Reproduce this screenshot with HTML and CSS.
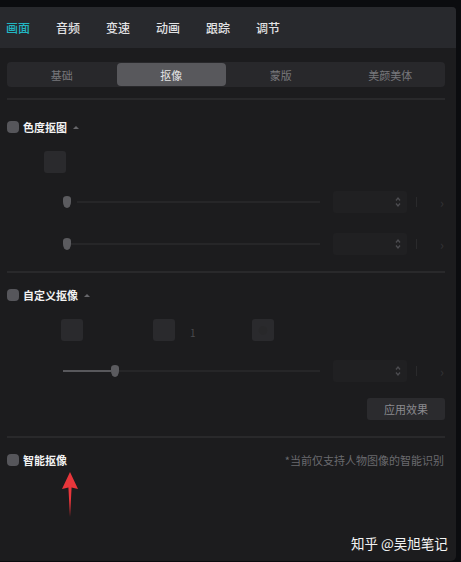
FILE: index.html
```html
<!DOCTYPE html>
<html lang="zh-CN">
<head>
    <meta charset="UTF-8">
    <meta name="viewport" content="width=device-width, initial-scale=1.0">
    <title>抠像</title>
    <link rel="stylesheet" href="styles.css">
</head>
<body>
<div class="window">
    <nav class="topnav">
        <span class="nav-item active">画面</span>
        <span class="nav-item">音频</span>
        <span class="nav-item">变速</span>
        <span class="nav-item">动画</span>
        <span class="nav-item">跟踪</span>
        <span class="nav-item">调节</span>
    </nav>

    <div class="content">
        <div class="subtabs">
            <span class="subtab">基础</span>
            <span class="subtab active">抠像</span>
            <span class="subtab">蒙版</span>
            <span class="subtab">美颜美体</span>
        </div>
        <div class="divider first"></div>

        <!-- 色度抠图 -->
        <div class="section-head">
            <span class="check"></span>
            <span class="title">色度抠图</span>
            <span class="caret"></span>
        </div>
        <div class="pick-row">
            <span class="swatch"></span>
        </div>
        <div class="slider-row row-a">
            <div class="slider">
                <span class="thumb"></span>
                <span class="track gap"></span>
            </div>
            <div class="num-input">
                <svg class="spin" width="6" height="12" viewBox="0 0 6 12"><path d="M1 4.5 L3 2 L5 4.5 M1 7.5 L3 10 L5 7.5" fill="none" stroke="#4c4c50" stroke-width="1.3"/></svg>
            </div>
            <span class="sep"></span>
            <span class="chev">›</span>
        </div>
        <div class="slider-row row-b">
            <div class="slider">
                <span class="thumb"></span>
                <span class="track"></span>
            </div>
            <div class="num-input">
                <svg class="spin" width="6" height="12" viewBox="0 0 6 12"><path d="M1 4.5 L3 2 L5 4.5 M1 7.5 L3 10 L5 7.5" fill="none" stroke="#4c4c50" stroke-width="1.3"/></svg>
            </div>
            <span class="sep"></span>
            <span class="chev">›</span>
        </div>
        <div class="divider"></div>

        <!-- 自定义抠像 -->
        <div class="section-head">
            <span class="check"></span>
            <span class="title">自定义抠像</span>
            <span class="caret"></span>
        </div>
        <div class="colors-row">
            <div class="color-group g1"><span class="swatch"></span></div>
            <div class="color-group g2"><span class="swatch"></span><span class="tiny">1</span></div>
            <div class="color-group g3"><span class="swatch dot"></span></div>
        </div>
        <div class="slider-row row-c">
            <div class="slider">
                <span class="fill"></span>
                <span class="thumb"></span>
                <span class="track"></span>
            </div>
            <div class="num-input">
                <svg class="spin" width="6" height="12" viewBox="0 0 6 12"><path d="M1 4.5 L3 2 L5 4.5 M1 7.5 L3 10 L5 7.5" fill="none" stroke="#4c4c50" stroke-width="1.3"/></svg>
            </div>
            <span class="sep"></span>
            <span class="chev">›</span>
        </div>
        <div class="btn-row">
            <button class="apply-btn">应用效果</button>
        </div>
        <div class="divider"></div>

        <!-- 智能抠像 -->
        <div class="section-head">
            <span class="check"></span>
            <span class="title">智能抠像</span>
            <span class="hint">*当前仅支持人物图像的智能识别</span>
        </div>
    </div>

    <svg class="arrow" width="16" height="45" viewBox="0 0 16 45">
        <path d="M8 0 L16 17 L9.6 15.5 L8 45 L6.4 15.5 L0 17 Z" fill="#e8363b"/>
    </svg>
    <div class="watermark">知乎 @吴旭笔记</div>
</div>
</body>
</html>
```

FILE: styles.css
```css
body {
    margin: 0;
    background-color: #0b0c0f;
    font-family: "Noto Sans CJK SC", "Noto Sans", sans-serif;
    color: #e6e6e6;
}
.window {
    position: relative;
    width: 456px;
    height: 554px;
    margin-top: 7px;
    background-color: #1c1c1e;
    border-radius: 0 4px 5px 0;
    overflow: hidden;
}
.topnav {
    display: flex;
    align-items: center;
    gap: 26px;
    height: 41px;
    padding-left: 6px;
    background-color: #28292d;
}
.nav-item {
    font-size: 12px;
    font-weight: 500;
    color: #e2e2e4;
    line-height: 1;
}
.nav-item.active {
    color: #22b6c2;
}
.content {
    padding: 14px 11px 0 7px;
}
.subtabs {
    display: grid;
    grid-template-columns: repeat(4, 1fr);
    height: 25px;
    padding: 1px 0;
    box-sizing: border-box;
    background-color: #28282b;
    border-radius: 4px;
}
.subtab {
    display: flex;
    align-items: center;
    justify-content: center;
    font-size: 11px;
    color: #77777b;
    border-radius: 4px;
}
.subtab.active {
    background-color: #58585c;
    color: #e4e4e6;
}
.divider {
    height: 2px;
    background-color: #29292b;
    margin-top: 16px;
}
.divider.first {
    margin-top: 11px;
}
.section-head {
    display: flex;
    align-items: center;
    height: 12px;
    margin-top: 16px;
}
.divider.first + .section-head {
    margin-top: 21px;
}
.check {
    width: 12px;
    height: 12px;
    border-radius: 4px;
    background-color: #56565b;
    margin-right: 4px;
}
.title {
    font-size: 11px;
    font-weight: 700;
    color: #f2f2f2;
    line-height: 1;
}
.caret {
    width: 0;
    height: 0;
    margin-left: 6px;
    border-left: 3px solid transparent;
    border-right: 3px solid transparent;
    border-bottom: 3px solid #66666a;
}
.hint {
    margin-left: auto;
    margin-right: 1px;
    font-size: 11px;
    color: #6a6a6e;
    line-height: 1;
}
.pick-row {
    margin-top: 18px;
    padding-left: 37px;
    height: 22px;
}
.swatch {
    display: block;
    width: 22px;
    height: 22px;
    border-radius: 3px;
    background-color: #2a2a2d;
}
.swatch.dot {
    background: radial-gradient(circle at 50% 52%, #28282a 0 4px, transparent 5px), #2a2a2d;
}
.slider-row {
    display: flex;
    align-items: center;
    height: 22px;
    padding-left: 56px;
}
.row-a { margin-top: 18px; }
.row-b { margin-top: 20px; }
.row-c { margin-top: 19px; }
.slider {
    display: flex;
    align-items: center;
    width: 257px;
}
.thumb {
    width: 8px;
    height: 12px;
    flex: none;
    background-color: #5b5b5f;
    border-radius: 4px 4px 4px 4px / 3px 3px 6px 6px;
}
.track {
    flex: 1;
    height: 2px;
    background-color: #262628;
}
.track.gap {
    margin-left: 6px;
}
.fill {
    width: 48px;
    height: 2px;
    background-color: #58585c;
}
.num-input {
    display: flex;
    align-items: center;
    justify-content: flex-end;
    width: 74px;
    height: 22px;
    margin-left: 13px;
    padding-right: 6px;
    box-sizing: border-box;
    background-color: #202022;
    border-radius: 3px;
}
.sep {
    width: 1px;
    height: 10px;
    margin-left: 9px;
    background-color: #2a2a2c;
}
.chev {
    margin-left: 23px;
    font-size: 13px;
    color: #333336;
    line-height: 1;
}
.colors-row {
    display: flex;
    align-items: center;
    margin-top: 18px;
    padding-left: 54px;
    height: 22px;
}
.color-group {
    display: flex;
    align-items: center;
}
.g1 { width: 92px; }
.g2 { width: 99px; }
.tiny {
    margin-left: 15px;
    font-size: 10px;
    color: #4a4a4d;
    line-height: 1;
    margin-top: 6px;
}
.btn-row {
    display: flex;
    justify-content: flex-end;
    margin-top: 16px;
}
.apply-btn {
    width: 78px;
    height: 22px;
    padding: 0;
    border: none;
    border-radius: 3px;
    background-color: #2b2b2e;
    color: #8a8a8e;
    font-family: inherit;
    font-size: 11px;
}
.arrow {
    position: absolute;
    left: 62px;
    top: 465px;
}
.watermark {
    position: absolute;
    left: 351px;
    top: 526px;
    font-size: 13.5px;
    color: #f4f4f4;
    white-space: nowrap;
}
```
